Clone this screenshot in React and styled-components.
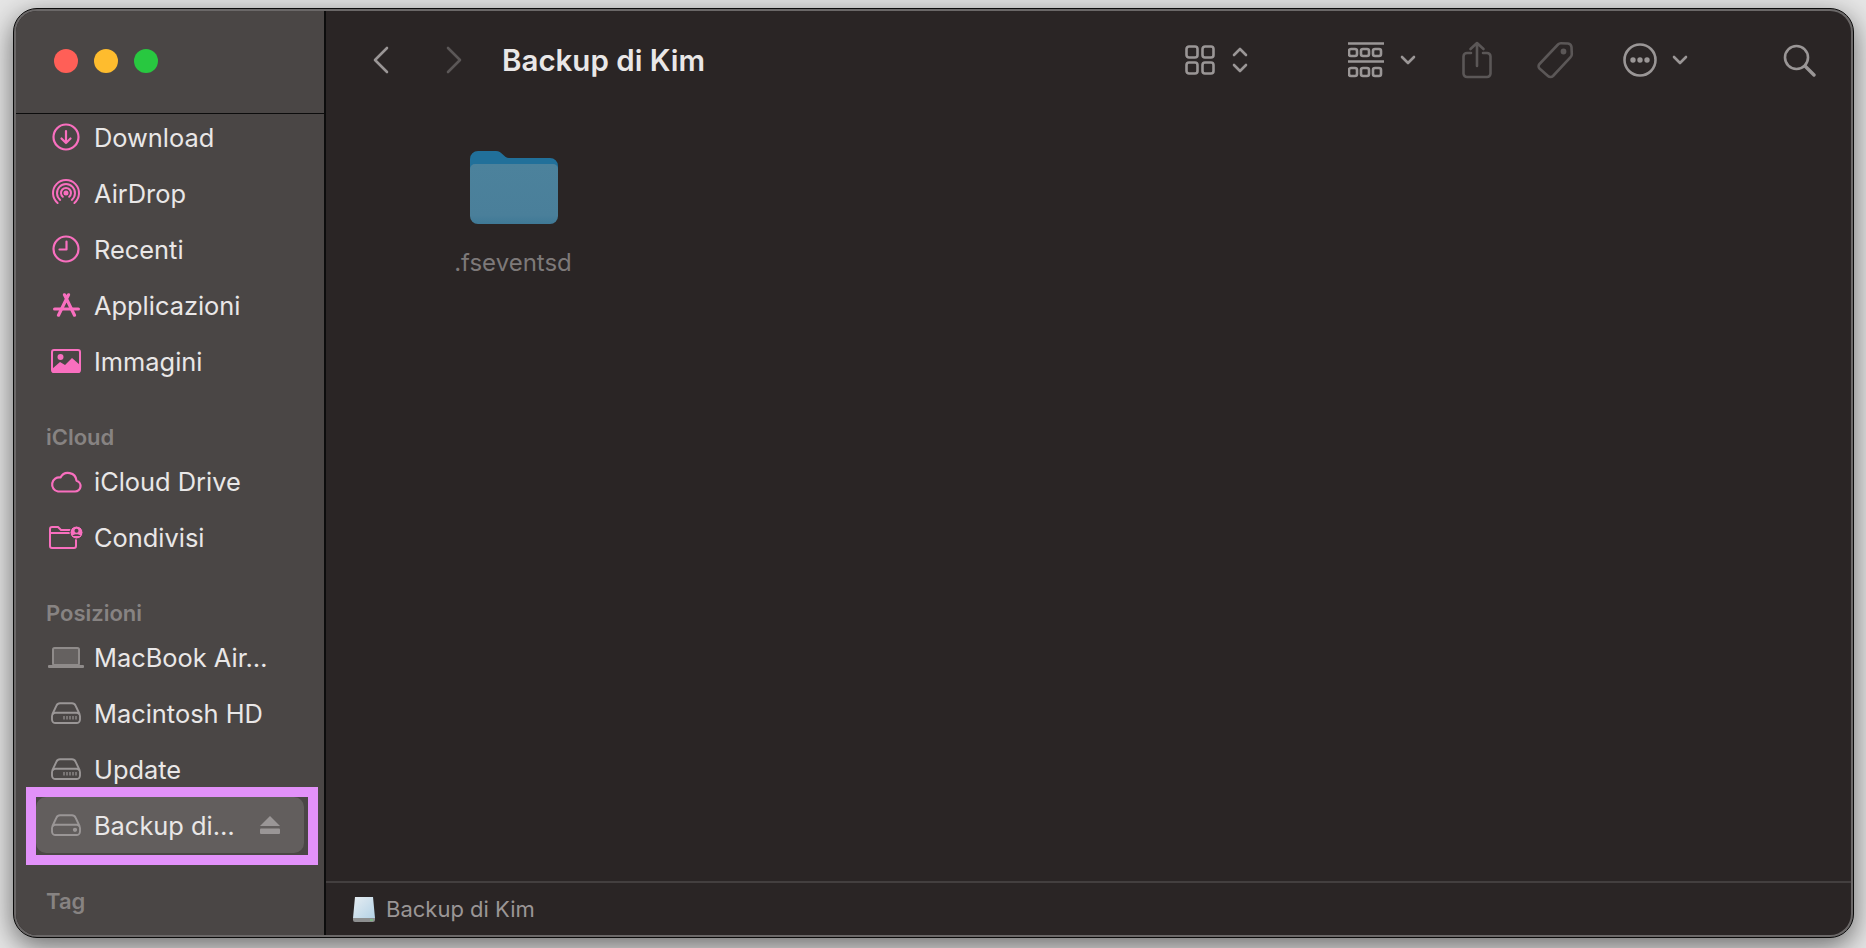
import styled, { createGlobalStyle } from "styled-components";

const GlobalStyle = createGlobalStyle`
    html, body {
        margin: 0;
        height: 100%;
        overflow: hidden;
        background: #e6e6e6;
        font-family: Inter, "Liberation Sans", sans-serif;
    }
`;

const PINK = "#f96fbf";
const GRAY = "#9a9696";
const DIM = "#5b5757";

const Stage = styled.div`
    width: 1866px;
    height: 948px;
    padding: 8px 0 0 13px;
    box-sizing: border-box;
`;

const Frame = styled.div`
    width: 1841px;
    height: 930px;
    box-sizing: border-box;
    border: 1px solid #0b0b0b;
    border-radius: 24px;
    padding: 2px;
    background: #6b6868;
    box-shadow: 0 8px 28px rgba(0, 0, 0, 0.55);
`;

const Win = styled.div`
    display: flex;
    height: 100%;
    border-radius: 21px;
    overflow: hidden;
    background: #2a2525;
`;

const Sidebar = styled.aside`
    width: 308px;
    flex: none;
    background: #4a4645;
    border-right: 2px solid #0c0c0c;
    overflow: hidden;
`;

const Titlebar = styled.div`
    display: flex;
    align-items: center;
    gap: 16px;
    height: 103px;
    margin-bottom: -1px;
    padding: 0 0 3px 38px;
    box-sizing: border-box;
    border-bottom: 1px solid #0c0c0c;
`;

const Light = styled.span`
    width: 24px;
    height: 24px;
    border-radius: 50%;
    background: ${(p) => p.$color};
`;

const Section = styled.div`
    display: flex;
    flex-direction: column;
    gap: 8px;
    margin-top: ${(p) => p.$top || 0}px;
`;

const Label = styled.div`
    height: 30px;
    line-height: 32px;
    margin: ${(p) => p.$top || 0}px 0 -2px 30px;
    font-size: 22px;
    font-weight: 600;
    color: #878382;
`;

const Row = styled.div`
    display: flex;
    align-items: center;
    width: 268px;
    height: 48px;
    box-sizing: border-box;
    margin-left: 20px;
    padding-left: 10px;
    font-size: 25.4px;
    color: #e9e7e7;
`;

const Highlight = styled.div`
    width: 292px;
    height: 78px;
    box-sizing: border-box;
    margin: -14px 0 0 10px;
    border: 10px solid #e291f9;
    background: #4a4645;
`;

const SelectedRow = styled(Row)`
    height: 56px;
    margin-left: 0;
    border-radius: 10px;
    background: #625e5d;
`;

const IconBox = styled.span`
    display: flex;
    align-items: center;
    justify-content: center;
    flex: none;
    width: 40px;
    margin-right: 8px;
`;

const Eject = styled.span`
    display: flex;
    margin-left: auto;
    margin-right: 24px;
`;

const Main = styled.main`
    flex: 1;
    display: flex;
    flex-direction: column;
    min-width: 0;
`;

const Toolbar = styled.header`
    display: flex;
    align-items: center;
    height: 98px;
    flex: none;
    padding: 0 35px 0 47px;
`;

const Title = styled.h1`
    margin: 0 auto 0 40px;
    font-size: 29.5px;
    font-weight: 600;
    color: #e9e7e7;
`;

const ToolIcon = styled.svg`
    flex: none;
    margin-left: ${(p) => p.$ml || 0}px;
    fill: none;
    stroke: ${(p) => p.$color || GRAY};
    stroke-width: 2.6;
    stroke-linecap: round;
    stroke-linejoin: round;
`;

const Files = styled.div`
    flex: 1;
    padding: 42px 0 0 98px;
`;

const FileItem = styled.div`
    display: flex;
    flex-direction: column;
    align-items: center;
    width: 180px;
`;

const FileName = styled.div`
    margin-top: 24px;
    margin-right: 2px;
    font-size: 24px;
    line-height: 30px;
    color: #7d7979;
`;

const StatusBar = styled.footer`
    display: flex;
    align-items: center;
    gap: 10px;
    height: 54px;
    flex: none;
    box-sizing: border-box;
    padding-left: 26px;
    border-top: 2px solid #433f3f;
    font-size: 22px;
    color: #9a9696;
`;

function Stroke({ w, h, color = PINK, sw = 2.2, children }) {
    return (
        <svg width={w} height={h} viewBox={`0 0 ${w} ${h}`} fill="none" stroke={color} strokeWidth={sw} strokeLinecap="round" strokeLinejoin="round">
            {children}
        </svg>
    );
}

const DownloadIcon = () => (
    <Stroke w={28} h={28}>
        <circle cx="14" cy="14" r="12.5" />
        <path d="M14 8v12M9.5 15.5L14 20l4.5-4.5" />
    </Stroke>
);

const AirDropIcon = () => (
    <Stroke w={30} h={28} sw={2}>
        <path d="M6.6 24A13 13 0 1 1 23.4 24" />
        <path d="M9.2 20.9A9 9 0 1 1 20.8 20.9" />
        <path d="M11.8 17.8A5 5 0 1 1 18.2 17.8" />
        <circle cx="15" cy="14" r="1.5" fill={PINK} />
    </Stroke>
);

const ClockIcon = () => (
    <Stroke w={28} h={28}>
        <circle cx="14" cy="14" r="12.5" />
        <path d="M14.5 6.5V14.5H7.5" />
    </Stroke>
);

const AppsIcon = () => (
    <Stroke w={27} h={24} sw={3.2}>
        <path d="M15.5 1.8L5.5 22.2M11.5 1.8L21.5 22.2" />
        <path d="M1.6 16h23.8" />
    </Stroke>
);

const ImagesIcon = () => (
    <svg width="30" height="24" viewBox="0 0 30 24">
        <rect x="1" y="1" width="28" height="22" rx="2" fill="none" stroke={PINK} strokeWidth="2" />
        <path d="M1 20l8-7 5 3 7-7 8 7v7a2 2 0 0 1-2 1H3a2 2 0 0 1-2-1z" fill={PINK} />
        <circle cx="9.5" cy="8" r="3" fill={PINK} />
    </svg>
);

const CloudIcon = () => (
    <Stroke w={32} h={24}>
        <path d="M8 22.5h17a5.5 5.5 0 0 0 1.5-10.8A8.5 8.5 0 0 0 10.5 8.5 7 7 0 0 0 8 22.5z" />
    </Stroke>
);

const SharedIcon = () => (
    <svg width="34" height="23" viewBox="0 0 34 23">
        <path d="M1 20V3a2 2 0 0 1 2-2h6l3 3h10M1 7h20M1 20a2 2 0 0 0 2 2h22a2 2 0 0 0 2-2v-8" fill="none" stroke={PINK} strokeWidth="2" strokeLinejoin="round" />
        <circle cx="27.5" cy="6.5" r="6.5" fill={PINK} stroke="#4a4645" strokeWidth="1" />
        <circle cx="27.5" cy="4.8" r="2" fill="#4a4645" />
        <path d="M23.5 10c.8-2.4 7.2-2.4 8 0z" fill="#4a4645" />
    </svg>
);

const LaptopIcon = () => (
    <svg width="36" height="21" viewBox="0 0 36 21">
        <rect x="5" y="1" width="26" height="17" rx="1.5" fill="#656160" stroke="#8f8b8a" strokeWidth="2" />
        <rect x="0" y="18" width="36" height="3" rx="1" fill="#8f8b8a" />
    </svg>
);

const DriveIcon = ({ slots }) => (
    <Stroke w={30} h={22} color={GRAY} sw={1.9}>
        <path d="M1.5 12L5.5 3.5Q6.5 1.2 9 1.2H21Q23.5 1.2 24.5 3.5L28.5 12" />
        <rect x="1" y="10.8" width="28" height="10.2" rx="3.5" />
        {slots ? (
            <path d="M13 14v3.5M16 14v3.5M19 14v3.5M22 14v3.5M25 14v3.5" strokeWidth="1.2" strokeLinecap="butt" />
        ) : (
            <circle cx="24" cy="15.8" r="1.2" fill={GRAY} />
        )}
    </Stroke>
);

const EjectIcon = () => (
    <svg width="20" height="18" viewBox="0 0 20 18" fill={GRAY}>
        <path d="M10 0L20 10H0z" />
        <rect x="0" y="12.5" width="20" height="5.5" rx="1" />
    </svg>
);

const FolderIcon = () => (
    <svg width="88" height="73" viewBox="0 0 88 73">
        <defs>
            <linearGradient id="folderFront" x1="0" y1="0" x2="0" y2="1">
                <stop offset="0" stopColor="#4c829c" />
                <stop offset="0.85" stopColor="#4a7f9a" />
                <stop offset="1" stopColor="#3f7996" />
            </linearGradient>
        </defs>
        <path d="M0 8a8 8 0 0 1 8-8h18c6 0 8 7 13 7h41a8 8 0 0 1 8 8v20H0z" fill="#21709a" />
        <path d="M0 18a5 5 0 0 1 5-5h78a5 5 0 0 1 5 5v47a8 8 0 0 1-8 8H8a8 8 0 0 1-8-8z" fill="url(#folderFront)" />
    </svg>
);

const DiskThumb = () => (
    <svg width="24" height="26" viewBox="0 0 24 26">
        <defs>
            <linearGradient id="diskFace" x1="0" y1="0" x2="1" y2="1">
                <stop offset="0" stopColor="#e6edf2" />
                <stop offset="1" stopColor="#b4d2e6" />
            </linearGradient>
        </defs>
        <path d="M3 1h18l2 21H1z" fill="url(#diskFace)" />
        <path d="M1 22h22v2a2 2 0 0 1-2 2H3a2 2 0 0 1-2-2z" fill="#8d8f90" />
        <rect x="18" y="23.5" width="3" height="1" fill="#6fdc7a" />
    </svg>
);

const Chevron = ({ ml, dim, d = "M2 2l6 6 6-6", w = 16, h = 10 }) => (
    <ToolIcon $ml={ml} $color={dim ? DIM : GRAY} width={w} height={h} viewBox={`0 0 ${w} ${h}`}>
        <path d={d} />
    </ToolIcon>
);

function GroupIcon() {
    const cells = [2, 14, 26];
    return (
        <ToolIcon $ml={100} width="36" height="36" viewBox="0 0 36 36" strokeWidth="2">
            <path d="M0.5 1.5h35M0.5 19.5h35" />
            {cells.map((x) => (
                <g key={x}>
                    <rect x={x - 1} y="7" width="8" height="7" rx="2" />
                    <rect x={x - 1} y="26" width="8" height="8" rx="2" />
                </g>
            ))}
        </ToolIcon>
    );
}

const mainItems = [
    { name: "Download", icon: <DownloadIcon /> },
    { name: "AirDrop", icon: <AirDropIcon /> },
    { name: "Recenti", icon: <ClockIcon /> },
    { name: "Applicazioni", icon: <AppsIcon /> },
    { name: "Immagini", icon: <ImagesIcon /> },
];

const cloudItems = [
    { name: "iCloud Drive", icon: <CloudIcon /> },
    { name: "Condivisi", icon: <SharedIcon /> },
];

const placeItems = [
    { name: "MacBook Air…", icon: <LaptopIcon /> },
    { name: "Macintosh HD", icon: <DriveIcon slots /> },
    { name: "Update", icon: <DriveIcon slots /> },
];

const renderRows = (items) =>
    items.map((item) => (
        <Row key={item.name}>
            <IconBox>{item.icon}</IconBox>
            {item.name}
        </Row>
    ));

export default function App() {
    return (
        <>
            <GlobalStyle />
            <Stage>
                <Frame>
                    <Win>
                        <Sidebar>
                            <Titlebar>
                                <Light $color="#ff5f57" />
                                <Light $color="#febc2e" />
                                <Light $color="#28c840" />
                            </Titlebar>
                            <Section>{renderRows(mainItems)}</Section>
                            <Section $top={36}>
                                <Label>iCloud</Label>
                                {renderRows(cloudItems)}
                            </Section>
                            <Section $top={36}>
                                <Label>Posizioni</Label>
                                {renderRows(placeItems)}
                                <Highlight>
                                    <SelectedRow>
                                        <IconBox><DriveIcon /></IconBox>
                                        Backup di…
                                        <Eject><EjectIcon /></Eject>
                                    </SelectedRow>
                                </Highlight>
                            </Section>
                            <Label $top={20}>Tag</Label>
                        </Sidebar>
                        <Main>
                            <Toolbar>
                                <Chevron d="M14 2L2 14l12 12" w={16} h={28} />
                                <Chevron ml={57} dim d="M2 2l12 12L2 26" w={16} h={28} />
                                <Title>Backup di Kim</Title>
                                <ToolIcon width="30" height="30" viewBox="0 0 30 30">
                                    <rect x="1.5" y="1.5" width="11" height="11" rx="2.5" />
                                    <rect x="17.5" y="1.5" width="11" height="11" rx="2.5" />
                                    <rect x="1.5" y="17.5" width="11" height="11" rx="2.5" />
                                    <rect x="17.5" y="17.5" width="11" height="11" rx="2.5" />
                                </ToolIcon>
                                <Chevron ml={17} d="M2 9l6-6 6 6M2 19l6 6 6-6" w={16} h={28} />
                                <GroupIcon />
                                <Chevron ml={16} />
                                <ToolIcon $ml={46} $color={DIM} width="30" height="38" viewBox="0 0 30 38">
                                    <path d="M9 12H5a3.5 3.5 0 0 0-3.5 3.5v17A3.5 3.5 0 0 0 5 36h20a3.5 3.5 0 0 0 3.5-3.5v-17A3.5 3.5 0 0 0 25 12h-4" />
                                    <path d="M15 25V2M8.5 8L15 2l6.5 6" />
                                </ToolIcon>
                                <ToolIcon $ml={45} $color={DIM} width="37" height="38" viewBox="0 0 37 38">
                                    <path d="M2.5 23L21 3.5a4 4 0 0 1 3-1.2l7 .2a4 4 0 0 1 3.5 3.6l.3 7a4 4 0 0 1-1.2 3L16 35a3.5 3.5 0 0 1-5 0l-8.5-7.5a3.2 3.2 0 0 1 0-4.5z" />
                                    <circle cx="26.5" cy="10.5" r="1.6" fill={DIM} />
                                </ToolIcon>
                                <ToolIcon $ml={49} width="34" height="34" viewBox="0 0 34 34">
                                    <circle cx="17" cy="17" r="15.5" />
                                    <circle cx="10" cy="17" r="1.4" fill={GRAY} />
                                    <circle cx="17" cy="17" r="1.4" fill={GRAY} />
                                    <circle cx="24" cy="17" r="1.4" fill={GRAY} />
                                </ToolIcon>
                                <Chevron ml={15} />
                                <ToolIcon $ml={95} width="33" height="33" viewBox="0 0 33 33">
                                    <circle cx="13.5" cy="13.5" r="11.5" />
                                    <path d="M22 22l9 9" strokeWidth="3.4" />
                                </ToolIcon>
                            </Toolbar>
                            <Files>
                                <FileItem>
                                    <FolderIcon />
                                    <FileName>.fseventsd</FileName>
                                </FileItem>
                            </Files>
                            <StatusBar>
                                <DiskThumb />
                                Backup di Kim
                            </StatusBar>
                        </Main>
                    </Win>
                </Frame>
            </Stage>
        </>
    );
}
